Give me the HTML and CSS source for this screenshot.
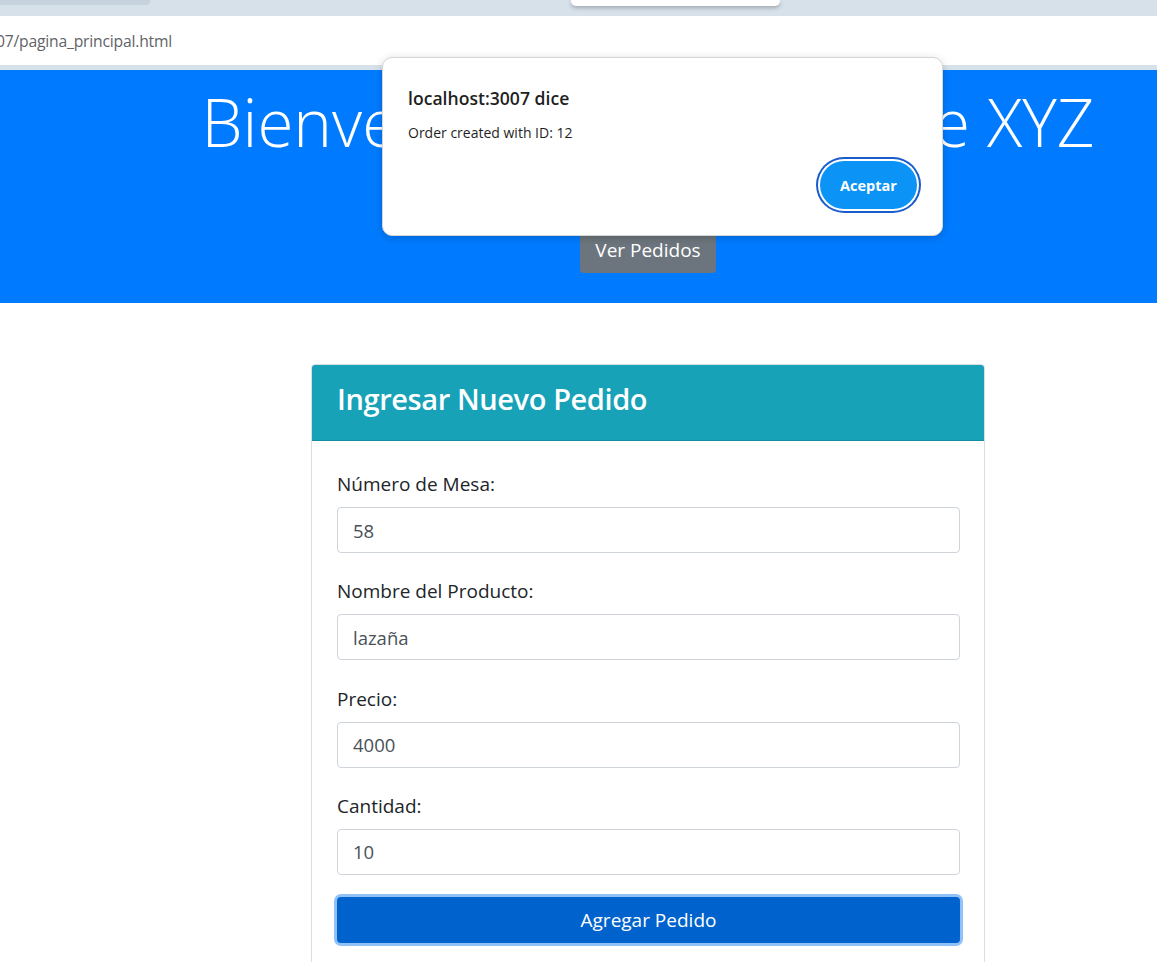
FILE: index.html
```html
<!DOCTYPE html>
<html lang="es">
<head>
<meta charset="utf-8">
<title>Pedidos</title>
<link rel="stylesheet" href="styles.css">
</head>
<body>
<div class="chrome-top">
  <div class="chrome-tab"></div>
  <div class="chrome-popup"></div>
</div>
<div class="addressbar"><span class="url">07/pagina_principal.html</span></div>
<div class="chrome-sep"></div>

<header class="jumbotron">
  <div class="jumbo-inner">
    <h1 class="display">Bienvenido al Restaurante XYZ</h1>
    <a class="btn-secondary">Ver Pedidos</a>
  </div>
</header>

<main class="main">
  <section class="card">
    <div class="card-header"><h2>Ingresar Nuevo Pedido</h2></div>
    <form class="card-body">
      <div class="form-group">
        <label>Número de Mesa:</label>
        <div class="input">58</div>
      </div>
      <div class="form-group">
        <label>Nombre del Producto:</label>
        <div class="input">lazaña</div>
      </div>
      <div class="form-group">
        <label>Precio:</label>
        <div class="input">4000</div>
      </div>
      <div class="form-group last">
        <label>Cantidad:</label>
        <div class="input">10</div>
      </div>
      <div class="btn-primary">Agregar Pedido</div>
    </form>
  </section>
</main>

<div class="dialog">
  <div class="dialog-title">localhost:3007 dice</div>
  <div class="dialog-msg">Order created with ID: 12</div>
  <div class="dialog-actions"><span class="dialog-btn">Aceptar</span></div>
</div>
</body>
</html>
```

FILE: styles.css
```css
html, body {
  margin: 0;
  padding: 0;
  background: #fff;
  overflow: hidden;
  font-family: "Open Sans", "Noto Sans", sans-serif;
  color: #212529;
}

.chrome-top {
  position: relative;
  height: 16px;
  background: #d7e1ea;
}
.chrome-tab {
  width: 150px;
  height: 5px;
  background: #c6d3de;
  border-bottom-right-radius: 4px;
}
.chrome-popup {
  position: absolute;
  left: 571px;
  top: 0;
  width: 209px;
  height: 6px;
  background: #fff;
  border-radius: 0 0 5px 5px;
  box-shadow: 0 2px 4px rgba(0, 0, 0, 0.25);
}

.addressbar {
  height: 49px;
  background: #fff;
  display: flex;
  align-items: center;
  font-size: 15.7px;
  color: #5f6368;
  overflow: hidden;
}
.url {
  margin-left: -4px;
  letter-spacing: -0.2px;
}
.chrome-sep {
  height: 5px;
  background: #d7e1ea;
}

.jumbotron {
  height: 233px;
  background: #007bff;
  color: #fff;
}
.jumbo-inner {
  box-sizing: border-box;
  padding-left: 139px;
  display: flex;
  flex-direction: column;
  align-items: center;
}
.display {
  margin: 12px 0 0;
  font-weight: 300;
  font-size: 65.5px;
  line-height: 80px;
  letter-spacing: 0;
  white-space: nowrap;
}
.btn-secondary {
  margin-top: 65px;
  height: 46px;
  padding: 0 15px;
  box-sizing: border-box;
  display: flex;
  align-items: center;
  background: #6c757d;
  color: #fff;
  font-size: 19px;
  border-radius: 4px;
}

.main {
  padding-top: 61px;
  padding-left: 311px;
}
.card {
  width: 674px;
  box-sizing: border-box;
  border: 1px solid #dcdfe2;
  border-radius: 4px;
  overflow: hidden;
}
.card-header {
  height: 76px;
  box-sizing: border-box;
  background: #17a2b8;
  border-bottom: 1px solid #138ea2;
  display: flex;
  align-items: center;
  padding: 0 0 8px 25px;
}
.card-header h2 {
  margin: 0;
  color: #fff;
  font-size: 29px;
  line-height: 36px;
  font-weight: 600;
  letter-spacing: -0.4px;
}
.card-body {
  display: block;
  padding: 30px 24px 40px 25px;
}
.form-group {
  display: flex;
  flex-direction: column;
  margin-bottom: 25.3px;
}
.form-group.last {
  margin-bottom: 22px;
}
.form-group label {
  font-size: 19px;
  line-height: 26px;
  margin-bottom: 10px;
  color: #212529;
}
.input {
  height: 46px;
  box-sizing: border-box;
  border: 1px solid #ced4da;
  border-radius: 4px;
  padding: 0 15px;
  display: flex;
  align-items: center;
  font-size: 18.5px;
  color: #495057;
}
.btn-primary {
  height: 46px;
  display: flex;
  align-items: center;
  justify-content: center;
  background: #0062cc;
  color: #fff;
  font-size: 19px;
  border-radius: 4px;
  box-shadow: 0 0 0 3px #90c2f8;
}

.dialog {
  position: absolute;
  left: 382px;
  top: 57px;
  width: 561px;
  height: 179px;
  box-sizing: border-box;
  background: #fff;
  border: 1px solid #d6d6d6;
  border-radius: 10px;
  box-shadow: 0 2px 8px rgba(0, 0, 0, 0.18);
  padding: 27px 25px 0 25px;
  display: flex;
  flex-direction: column;
}
.dialog-title {
  font-size: 17.6px;
  font-weight: 600;
  line-height: 26px;
  color: #1f1f1f;
}
.dialog-msg {
  margin-top: 12px;
  font-size: 14px;
  line-height: 20px;
  color: #1f1f1f;
}
.dialog-actions {
  display: flex;
  justify-content: flex-end;
  margin-top: 18px;
}
.dialog-btn {
  width: 97px;
  height: 48px;
  border-radius: 24px;
  background: #0b93f6;
  color: #fff;
  font-weight: 700;
  font-size: 14.5px;
  display: flex;
  align-items: center;
  justify-content: center;
  box-shadow: 0 0 0 2px #fff, 0 0 0 4px #1a5ccc;
}
```
